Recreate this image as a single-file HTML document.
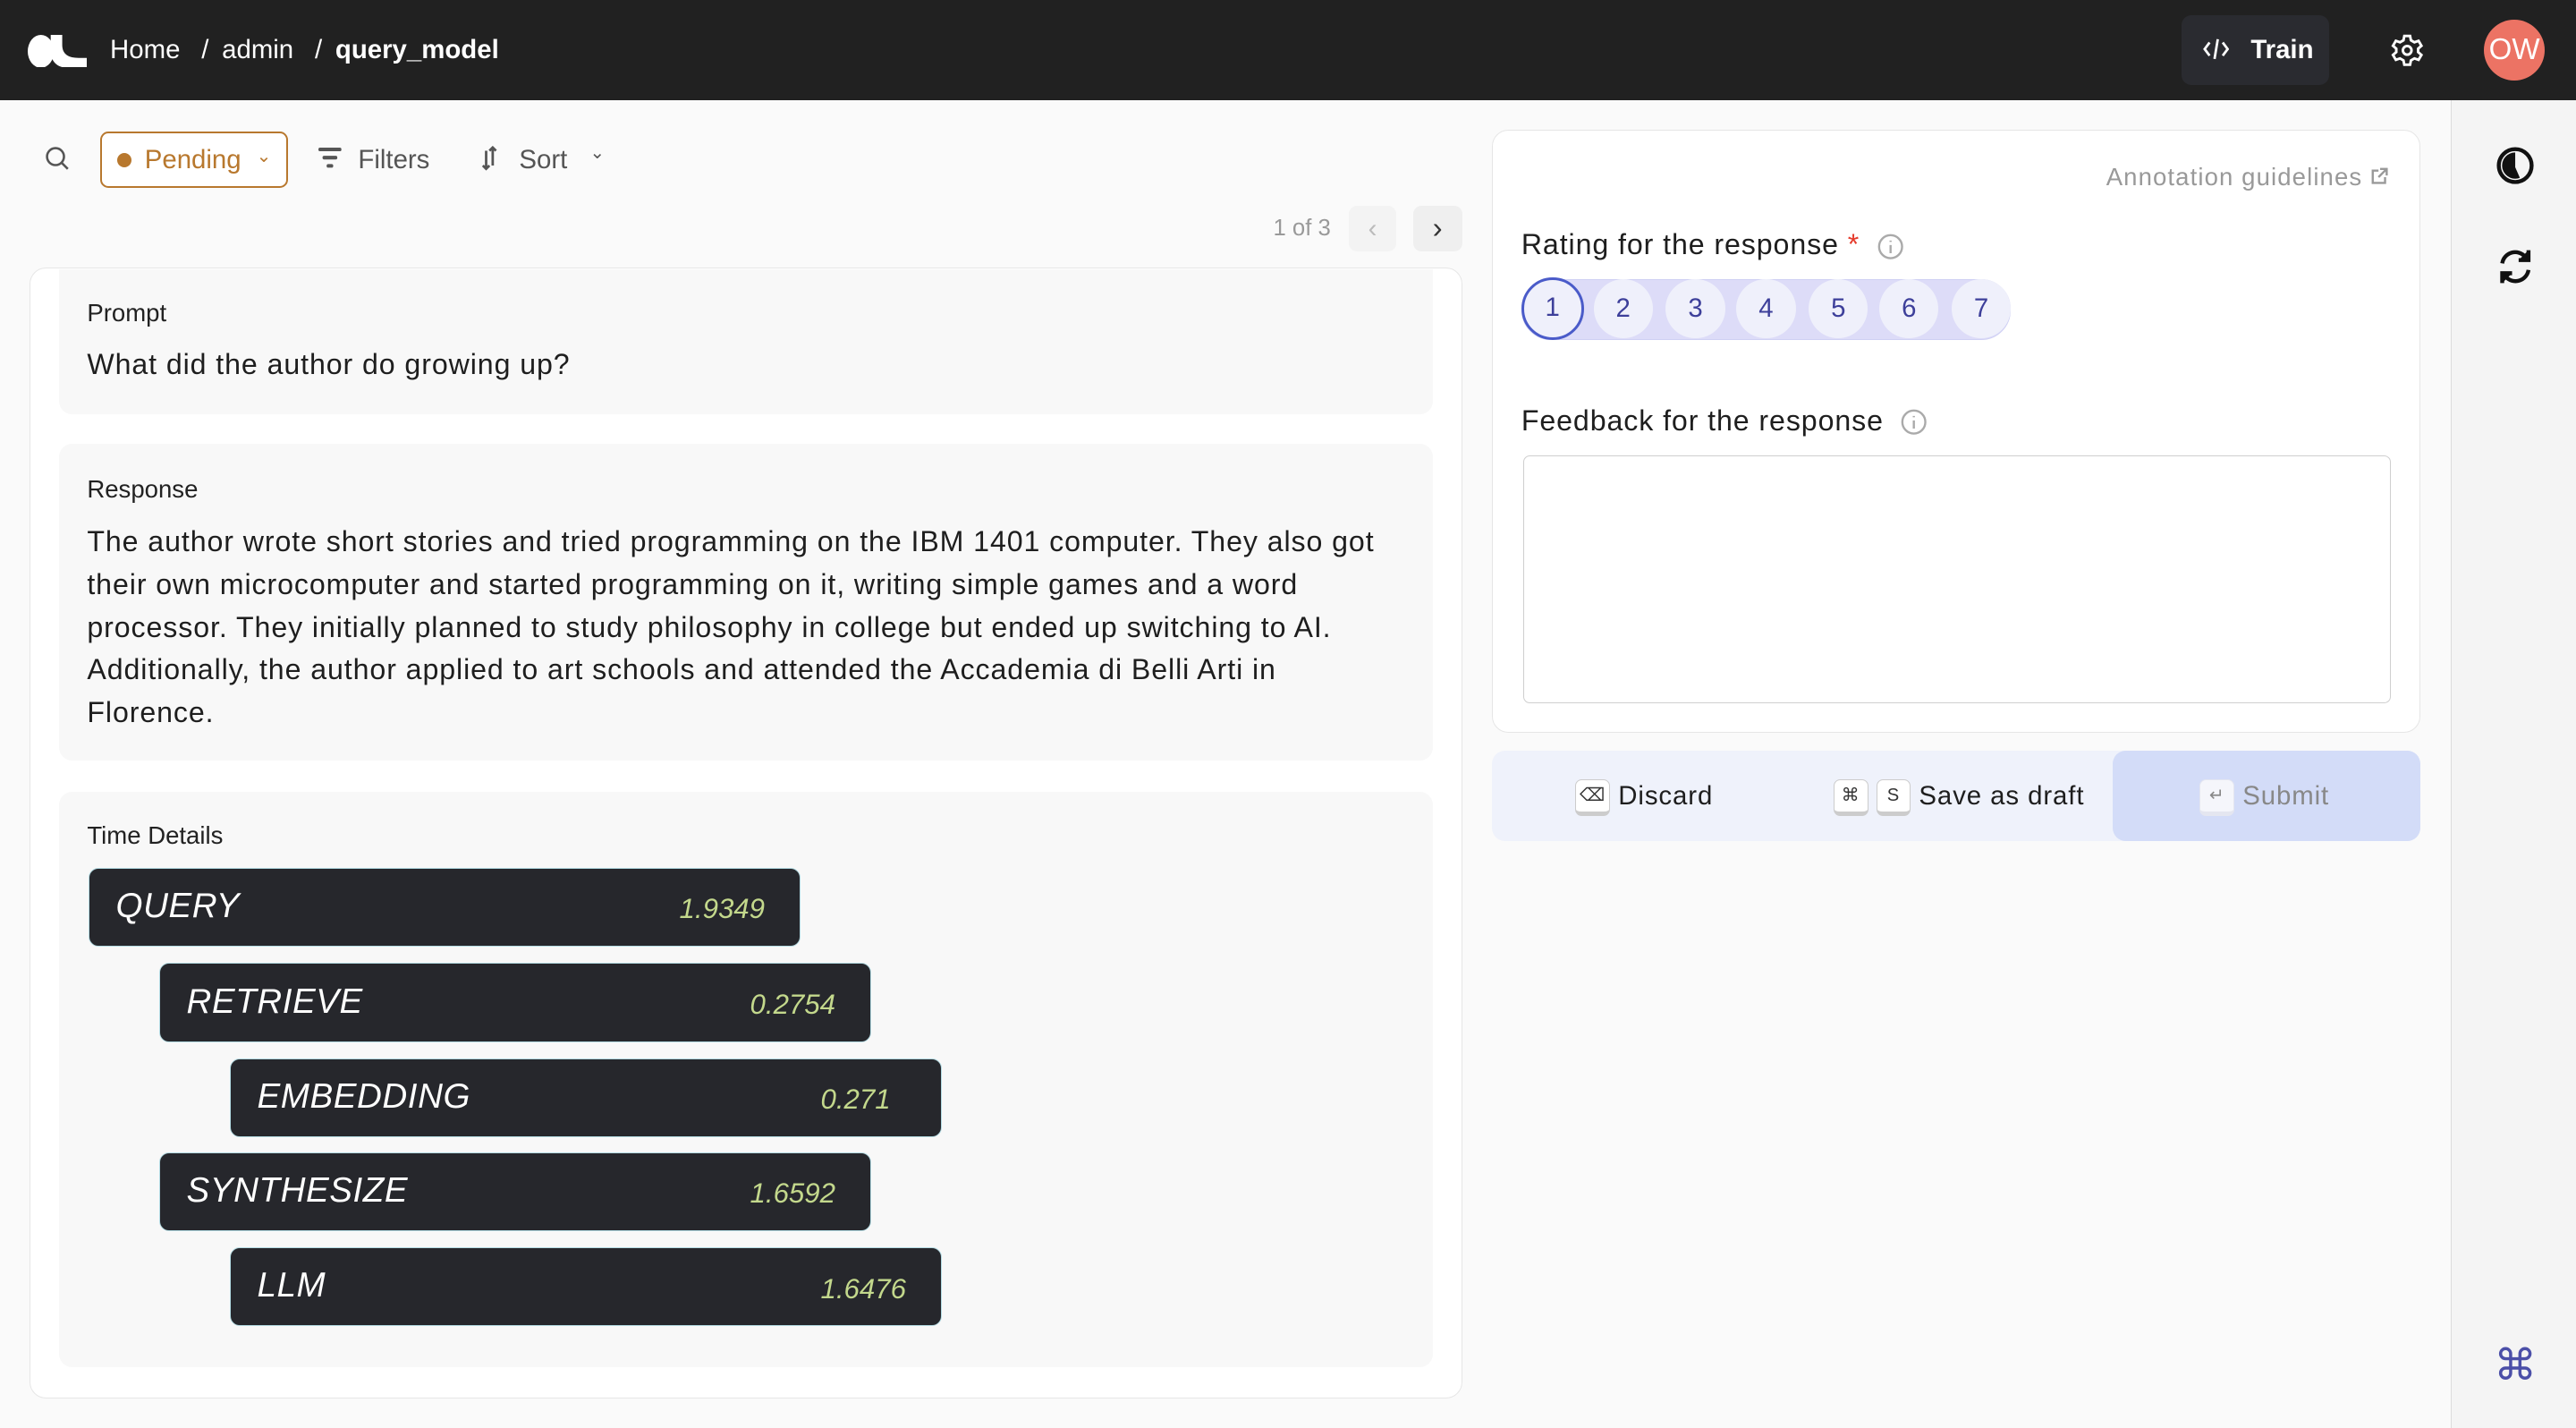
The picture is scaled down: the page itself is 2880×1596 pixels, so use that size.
<!DOCTYPE html>
<html><head><meta charset="utf-8">
<style>
html,body{margin:0;padding:0;}
body{width:1568px;height:869px;zoom:1.836735;overflow:hidden;background:#fafafa;font-family:"Liberation Sans",sans-serif;color:#1e1e1e;position:relative;}
.a{position:absolute;}
.hdr{left:0;top:0;width:1568px;height:61px;background:#212121;}
.bc{top:21px;font-size:16px;color:#fff;white-space:nowrap;}
.card{background:#fff;border:1px solid #e6e6e6;border-radius:10px;}
.sub{background:#f8f8f8;border-radius:8px;}
.lbl{font-size:15px;color:#222;}
.bar{background:#26272c;border:1px solid #b4dbe3;border-radius:6px;height:47px;width:432px;color:#fff;}
.bar .n{position:absolute;left:16px;top:11px;font-size:21px;font-style:italic;letter-spacing:.3px;}
.bar .v{position:absolute;left:359px;top:15px;font-size:17px;font-style:italic;color:#c3d88c;}
.rc{width:36px;height:36px;border-radius:50%;background:#eff0fb;color:#3d3f9a;font-size:16px;text-align:center;line-height:36px;top:0;}
.key{display:inline-block;width:20px;height:19px;border:1px solid #ccc;border-bottom:3px solid #ccc;border-radius:4px;background:#fff;font-size:11px;text-align:center;line-height:19px;vertical-align:middle;color:#333;}
.t{letter-spacing:.5px;}
</style></head><body>
<div class="a hdr"></div>
<svg class="a" style="left:17px;top:21px" width="36" height="20" viewBox="0 0 36 20"><ellipse cx="8" cy="10" rx="8" ry="10" fill="#fff"/><path d="M14 0h7v6c0 6 4 8 10 8h5v6H24c-6 0-10-4-10-10z" fill="#fff"/></svg>
<div class="a bc" style="left:67px">Home<span style="margin:0 8px 0 13px">/</span>admin<span style="margin:0 8px 0 13px">/</span><b>query_model</b></div>
<div class="a" style="left:1328px;top:9px;width:90px;height:43px;background:#2a2b30;border-radius:6px;color:#fff;font-size:16px;font-weight:bold;line-height:43px;">
<svg style="position:absolute;left:13px;top:14px" width="16" height="14" viewBox="0 0 16 14" fill="none" stroke="#fff" stroke-width="1.5"><path d="M4 3 1 7l3 4M12 3l3 4-3 4M9 1 7 13"/></svg><span style="position:absolute;left:42px">Train</span></div>
<svg class="a" style="left:1455px;top:20px" width="21" height="21" viewBox="0 0 24 24" fill="none" stroke="#fff" stroke-width="1.8"><circle cx="12" cy="12" r="3"/><path d="M10 2h4l.6 3 2.4 1.4 2.9-1 2 3.4-2.3 2v2.4l2.3 2-2 3.4-2.9-1L14.6 19 14 22h-4l-.6-3L7 17.6l-2.9 1-2-3.4 2.3-2v-2.4l-2.3-2 2-3.4 2.9 1L9.4 5z"/></svg>
<div class="a" style="left:1512px;top:12px;width:37px;height:37px;border-radius:50%;background:#ec7364;color:#fff;font-size:18px;text-align:center;line-height:37px;">OW</div>

<div class="a" style="left:1492px;top:61px;width:76px;height:808px;background:#f4f4f4;border-left:1px solid #dcdcdc;"></div>
<svg class="a" style="left:1519px;top:89px" width="24" height="24" viewBox="0 0 24 24"><circle cx="12" cy="12" r="10" fill="none" stroke="#111" stroke-width="2.4"/><path d="M12 4a8 8 0 0 0 0 16c1 0 2-.2 2.8-.6L12 13z" fill="#111"/></svg>
<svg class="a" style="left:1520px;top:150px" width="22" height="24" viewBox="0 0 22 24" fill="none" stroke="#111" stroke-width="2.4"><path d="M3 10a8 8 0 0 1 14-4"/><path d="M19 2v6h-6" fill="#111"/><path d="M19 14a8 8 0 0 1-14 4"/><path d="M3 22v-6h6" fill="#111"/></svg>
<div class="a" style="left:1518px;top:816px;font-size:26px;color:#4b4fa8;">⌘</div>

<svg class="a" style="left:27px;top:89px" width="15" height="15" viewBox="0 0 16 16" fill="none" stroke="#555" stroke-width="1.5"><circle cx="7" cy="7" r="5.5"/><path d="M11 11l4 4"/></svg>
<div class="a" style="left:61px;top:80px;width:112px;height:32px;border:1.5px solid #b8782e;border-radius:5px;background:#fff;color:#b8782e;font-size:16px;">
<span class="a" style="left:9px;top:12px;width:9px;height:9px;border-radius:50%;background:#b8782e"></span>
<span class="a" style="left:26px;top:7px">Pending</span><span class="a" style="left:94px;top:7px;font-size:11px">⌄</span></div>
<svg class="a" style="left:194px;top:90px" width="14" height="13" viewBox="0 0 14 13" fill="#555"><rect x="0" y="0" width="14" height="2.2" rx="1"/><rect x="2.5" y="5" width="9" height="2.2" rx="1"/><rect x="5" y="10" width="4" height="2.2" rx="1"/></svg>
<div class="a" style="left:218px;top:88px;font-size:16px;color:#555">Filters</div>
<svg class="a" style="left:293px;top:89px" width="10" height="15" viewBox="0 0 10 15" fill="none" stroke="#555" stroke-width="1.5"><path d="M3 3v11M1 12l2 2 2-2M7 1v11M5 3l2-2 2 2"/></svg>
<div class="a" style="left:316px;top:88px;font-size:16px;color:#555">Sort</div>
<div class="a" style="left:359px;top:86px;font-size:11px;color:#555">⌄</div>

<div class="a" style="left:775px;top:131px;font-size:14px;color:#999">1 of 3</div>
<div class="a" style="left:821px;top:125px;width:29px;height:28px;background:#f3f3f3;border-radius:5px;color:#bbb;text-align:center;line-height:28px;font-size:16px">‹</div>
<div class="a" style="left:860px;top:125px;width:30px;height:28px;background:#efefef;border-radius:5px;color:#333;text-align:center;line-height:28px;font-size:18px">›</div>

<div class="a card" style="left:18px;top:163px;width:871px;height:687px;"></div>
<div class="a sub" style="left:36px;top:164px;width:836px;height:88px;border-radius:0 0 8px 8px"></div>
<div class="a lbl" style="left:53px;top:182px">Prompt</div>
<div class="a t" style="left:53px;top:212px;font-size:17.5px">What did the author do growing up?</div>
<div class="a sub" style="left:36px;top:270px;width:836px;height:193px"></div>
<div class="a lbl" style="left:53px;top:289px">Response</div>
<div class="a t" style="left:53px;top:317px;font-size:17.5px;line-height:26px;white-space:nowrap">The author wrote short stories and tried programming on the IBM 1401 computer. They also got<br>their own microcomputer and started programming on it, writing simple games and a word<br>processor. They initially planned to study philosophy in college but ended up switching to AI.<br>Additionally, the author applied to art schools and attended the Accademia di Belli Arti in<br>Florence.</div>
<div class="a sub" style="left:36px;top:482px;width:836px;height:350px"></div>
<div class="a lbl" style="left:53px;top:500px">Time Details</div>
<div class="a bar" style="left:54px;top:528px"><span class="n">QUERY</span><span class="v">1.9349</span></div>
<div class="a bar" style="left:97px;top:586px"><span class="n">RETRIEVE</span><span class="v">0.2754</span></div>
<div class="a bar" style="left:140px;top:644px"><span class="n">EMBEDDING</span><span class="v">0.271</span></div>
<div class="a bar" style="left:97px;top:701px"><span class="n">SYNTHESIZE</span><span class="v">1.6592</span></div>
<div class="a bar" style="left:140px;top:759px"><span class="n">LLM</span><span class="v">1.6476</span></div>

<div class="a card" style="left:908px;top:79px;width:564px;height:366px;"></div>
<div class="a" style="left:1282px;top:99px;font-size:15px;color:#999;letter-spacing:.6px">Annotation guidelines</div>
<svg class="a" style="left:1443px;top:102px" width="11" height="11" viewBox="0 0 11 11" fill="none" stroke="#999" stroke-width="1.3"><path d="M5 2H1.5v7.5H9V6M6 1h4v4M10 1 5 6"/></svg>
<div class="a t" style="left:926px;top:139px;font-size:17.5px">Rating for the response <span style="color:#e53b2c">*</span></div>
<svg class="a" style="left:1143px;top:142px" width="16" height="16" viewBox="0 0 16 16" fill="none" stroke="#aaa" stroke-width="1.3"><circle cx="8" cy="8" r="7"/><path d="M8 7v5M8 4.3v.8"/></svg>
<div class="a" style="left:926px;top:170px;width:298px;height:37px;background:#dddcf8;border-radius:18px;border:1px solid #cfd0f3;box-sizing:border-box"></div>
<div class="a" style="left:926px;top:170px;width:300px;height:37px">
<div class="a rc" style="left:0;width:38px;height:38px;top:-1px;border:2px solid #4a5bc9;box-sizing:border-box;line-height:34px">1</div>
<div class="a rc" style="left:44px">2</div><div class="a rc" style="left:88px">3</div><div class="a rc" style="left:131px">4</div><div class="a rc" style="left:175px">5</div><div class="a rc" style="left:218px">6</div><div class="a rc" style="left:262px">7</div></div>
<div class="a t" style="left:926px;top:246px;font-size:17.5px">Feedback for the response</div>
<svg class="a" style="left:1157px;top:249px" width="16" height="16" viewBox="0 0 16 16" fill="none" stroke="#aaa" stroke-width="1.3"><circle cx="8" cy="8" r="7"/><path d="M8 7v5M8 4.3v.8"/></svg>
<div class="a" style="left:927px;top:277px;width:527px;height:150px;border:1px solid #cfcfcf;border-radius:4px;background:#fff"></div>

<div class="a" style="left:908px;top:457px;width:565px;height:55px;background:#eff2fb;border-radius:8px"></div>
<div class="a" style="left:1286px;top:457px;width:187px;height:55px;background:#d3dcf8;border-radius:8px"></div>
<div class="a t" style="left:959px;top:474px;font-size:16px"><span class="key">⌫</span>&nbsp;Discard</div>
<div class="a t" style="left:1116px;top:474px;font-size:16px"><span class="key">⌘</span> <span class="key">S</span>&nbsp;Save as draft</div>
<div class="a t" style="left:1339px;top:474px;font-size:16px;color:#888"><span class="key" style="border-color:#e4e6f0;background:#f5f6fb;color:#888">↵</span>&nbsp;Submit</div>
</body></html>
